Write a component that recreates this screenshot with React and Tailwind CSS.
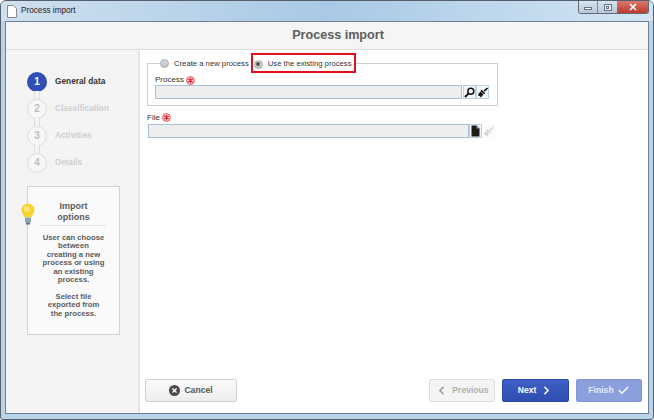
import { Check, ChevronLeft, ChevronRight, X } from "lucide-react";

const font = "font-['Liberation_Sans',Arial,sans-serif]";

const steps = [
  { n: 1, label: "General data", active: true },
  { n: 2, label: "Classification" },
  { n: 3, label: "Activities" },
  { n: 4, label: "Details" },
];

function Required() {
  return (
    <svg width="9" height="9" viewBox="0 0 9 9" className="ml-[2px] shrink-0">
      <circle cx="4.5" cy="4.5" r="3.9" fill="#fbe3e3" stroke="#e0474c" strokeWidth="1" />
      <path d="M4.5 1.8v5.4M2.2 3.1l4.6 2.8M6.8 3.1L2.2 5.9" stroke="#d9252c" strokeWidth="1.2" />
    </svg>
  );
}

function Radio({ checked }) {
  return (
    <span className="w-[7px] h-[7px] box-content rounded-full border border-[#a9a9a9] bg-gradient-to-b from-[#d8d8d8] to-[#c4c4c4] flex items-center justify-center shrink-0">
      {checked && <span className="w-[4px] h-[4px] rounded-full bg-[#555]" />}
    </span>
  );
}

function SearchIcon() {
  return (
    <svg width="11" height="11" viewBox="0 0 11 11">
      <circle cx="6.8" cy="4.2" r="3" fill="none" stroke="#111" strokeWidth="1.5" />
      <path d="M4.6 6.4L1 10" stroke="#111" strokeWidth="2" />
    </svg>
  );
}

function BroomIcon({ color = "#111" }) {
  return (
    <svg width="11" height="11" viewBox="0 0 11 11">
      <path d="M10.5 1L7 4.2" stroke={color} strokeWidth="1.6" />
      <path d="M4.6 2.8l3.6 3.4-1.2 1.1-3.6-3.4z" fill={color} />
      <path d="M3.4 4.6l3 3-2.4 2.8-1-.6.6-1.4-1.2.9-1.5-1 1.3-1-1.2.2z" fill={color} />
    </svg>
  );
}

function FileIcon() {
  return (
    <svg width="9" height="12" viewBox="0 0 9 12">
      <path d="M0.5 0.5h5l3 3v8h-8z" fill="#1c1c1c" />
      <path d="M5.5 0.5v3h3" fill="#9a9a9a" />
    </svg>
  );
}

function IconBox({ children, className = "" }) {
  return (
    <div className={`w-[11px] h-[12px] box-content border border-[#bccfe3] flex items-center justify-center bg-[#f4f7fa] ${className}`}>
      {children}
    </div>
  );
}

function Stepper() {
  return (
    <div className="ml-[21px] flex flex-col">
      {steps.map((s, i) => (
        <div key={s.n} className="flex flex-col">
          {i > 0 && <div className="ml-[7px] w-[6px] h-[8px] border-x border-[#dcdcdc] bg-[#f4f4f4] relative z-10" />}
          <div className="flex items-center h-[19px]">
            <div
              className={
                s.active
                  ? "w-[20px] h-[20px] rounded-full bg-[#2f4fb5] text-white flex items-center justify-center text-[10px] font-bold"
                  : "w-[20px] h-[20px] rounded-full border border-[#dcdcdc] bg-[#f7f7f7] text-[#bdbdbd] flex items-center justify-center text-[10px] font-bold"
              }
            >
              {s.n}
            </div>
            <span className={s.active ? "ml-[8px] text-[8.3px] font-bold text-[#333]" : "ml-[8px] text-[8.3px] font-bold text-[#cfcfcf]"}>
              {s.label}
            </span>
          </div>
        </div>
      ))}
    </div>
  );
}

function HelpBox() {
  return (
    <div className="relative ml-[21px] mt-[14px] w-[93px] h-[149px] border border-[#d2d2d2] bg-[#fafafa] px-[14px] pt-[14px] text-center text-[#5c5c5c]">
      {/* Bulb */}
      <svg width="14" height="23" viewBox="0 0 14 23" className="absolute -left-[7px] top-[16px]">
        <path d="M7 0.5a6.5 6.5 0 0 1 6.5 6.5c0 2.8-2 4-2.5 7h-8c-.5-3-2.5-4.2-2.5-7A6.5 6.5 0 0 1 7 0.5z" fill="#f7d330" />
        <circle cx="6" cy="6" r="3" fill="#fbe57e" />
        <rect x="4" y="14.5" width="6" height="5" fill="#8ea4ae" />
        <rect x="5" y="19.5" width="4" height="2" fill="#5f7480" />
      </svg>
      <div className="text-[9px] font-bold leading-[10.5px] pb-[3px] border-b border-[#e4e4e4] -mx-[1px]">
        Import
        <br />
        options
      </div>
      <div className="-mx-[12px] mt-[8px] text-[7.7px] font-bold leading-[8.4px]">
        User can choose
        <br />
        between
        <br />
        creating a new
        <br />
        process or using
        <br />
        an existing
        <br />
        process.
        <br />
        <br />
        Select file
        <br />
        exported from
        <br />
        the process.
      </div>
    </div>
  );
}

export default function App() {
  return (
    <div className={`${font} w-[654px] h-[420px] overflow-hidden flex flex-col bg-[#b9d3ea] border border-[#55606c] rounded-t-[6px] rounded-b-[3px]`}>
      {/* Title bar */}
      <div className="h-[20px] flex justify-between bg-gradient-to-r from-[#cfe0ee] via-[#a9c9e6] to-[#d3e5f3]">
        <div className="flex items-center pl-[6px]">
          <svg width="10" height="13" viewBox="0 0 10 13">
            <path d="M0.5 0.5h6l3 3v9h-9z" fill="#fff" stroke="#8a8a8a" />
          </svg>
          <span className="ml-[4px] text-[8.2px] text-[#222]">Process import</span>
        </div>
        <div className="mr-[4px] h-[13px] flex border border-t-0 border-[#5d6b7a] rounded-b-[3px] overflow-hidden">
          <div className="w-[19px] flex items-center justify-center border-r border-[#7b8896] bg-gradient-to-b from-[#d8e4ef] to-[#b6c8d9]">
            <span className="w-[8px] h-[3px] mt-[3px] bg-white border border-[#66727e]" />
          </div>
          <div className="w-[19px] flex items-center justify-center bg-gradient-to-b from-[#d8e4ef] to-[#b6c8d9]">
            <span className="w-[8px] h-[7px] bg-white/60 border border-[#66727e] flex items-center justify-center">
              <span className="w-[3px] h-[3px] border border-[#66727e]" />
            </span>
          </div>
          <div className="w-[31px] flex items-center justify-center bg-gradient-to-b from-[#d9776b] to-[#bb3a2c]">
            <X size={10} strokeWidth={4} color="#fff" />
          </div>
        </div>
      </div>

      {/* Client area */}
      <div className="ml-[4px] mr-[4px] h-[393px] flex flex-col bg-white border border-[#6d8095]">
        <div className="h-[28px] shrink-0 pl-[22px] bg-[#f5f5f5] border-b border-[#dcdcdc] flex items-center justify-center text-[12.6px] font-bold text-[#5c5c5c]">
          Process import
        </div>

        <div className="flex-1 flex min-h-0">
          {/* Sidebar */}
          <div className="w-[134px] shrink-0 bg-[#f4f4f4] border-r-2 border-[#e4e4e4] pt-[22px]">
            <Stepper />
            <HelpBox />
          </div>

          {/* Main */}
          <div className="flex-1 flex flex-col pl-[5px] pr-[6px] pb-[11px] min-w-0">
            <div className="flex-1 pl-[2px]">
              <fieldset className="mt-[3px] w-[351px] h-[53px] border border-[#cfcfcf] pl-[7px]">
                <legend className="flex items-center text-[7.7px] text-[#333] ml-[5px] h-[20px]">
                  <span className="flex items-center pr-[2px] pt-[2px]">
                    <Radio />
                    <span className="ml-[5px]">Create a new process</span>
                  </span>
                  <span className="flex items-center h-[20px] border-2 border-[#e0101f] pl-[1px] pr-[2px] pt-[2px]">
                    <Radio checked />
                    <span className="ml-[5px]">Use the existing process</span>
                  </span>
                </legend>
                <div className="flex items-center text-[8px] text-[#333] h-[11px] mt-[1px] pt-[1px]">
                  Process
                  <Required />
                </div>
                <div className="flex items-center">
                  <div className="w-[305px] h-[12px] box-content bg-[#eeeeee] border border-[#a9c0d8]" />
                  <IconBox className="ml-[1px]">
                    <SearchIcon />
                  </IconBox>
                  <IconBox>
                    <BroomIcon />
                  </IconBox>
                </div>
              </fieldset>

              <div className="mt-[5px] flex items-center text-[8px] text-[#333] h-[13px]">
                File
                <Required />
              </div>
              <div className="flex items-center ml-[1px]">
                <div className="w-[319px] h-[12px] box-content bg-[#eeeeee] border border-[#a9c0d8]" />
                <IconBox>
                  <FileIcon />
                </IconBox>
                <IconBox className="opacity-40 border-transparent">
                  <BroomIcon color="#999" />
                </IconBox>
              </div>
            </div>

            {/* Footer */}
            <div className="flex items-center justify-between h-[23px]">
              <button className="w-[92px] h-[23px] flex items-center justify-center rounded-[2px] border border-[#cfcfcf] bg-gradient-to-b from-[#fbfbfb] to-[#ececec] text-[8.6px] font-bold text-[#555]">
                <span className="w-[11px] h-[11px] rounded-full bg-[#4a4a4a] flex items-center justify-center mr-[4px]">
                  <X size={7} strokeWidth={4} color="#fff" />
                </span>
                Cancel
              </button>
              <div className="flex gap-[7px]">
                <button className="w-[66px] h-[23px] flex items-center justify-center rounded-[2px] border border-[#dedede] bg-[#f4f4f4] text-[8.6px] font-bold text-[#b0b0b0]">
                  <ChevronLeft size={13} strokeWidth={3} color="#999" className="mr-[4px]" />
                  Previous
                </button>
                <button className="w-[67px] h-[23px] flex items-center justify-center rounded-[2px] border border-[#2a49a8] bg-gradient-to-b from-[#3f60c6] to-[#2e4db0] text-[8.6px] font-bold text-white">
                  Next
                  <ChevronRight size={13} strokeWidth={3} color="#fff" className="ml-[4px]" />
                </button>
                <button className="w-[66px] h-[23px] flex items-center justify-center rounded-[2px] border border-[#8197d6] bg-[#8a9fdc] text-[8.6px] font-bold text-[#e8ecf8]">
                  Finish
                  <Check size={13} strokeWidth={2.5} color="#fff" className="ml-[3px]" />
                </button>
              </div>
            </div>
          </div>
        </div>
      </div>
    </div>
  );
}
